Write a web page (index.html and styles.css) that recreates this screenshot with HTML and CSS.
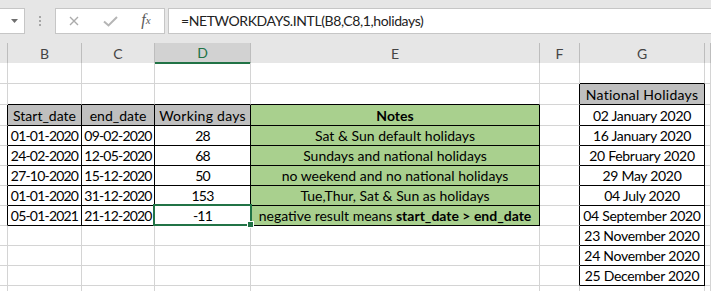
FILE: index.html
```html
<!DOCTYPE html>
<html lang="en">
<head>
  <meta charset="UTF-8">
  <title>NETWORKDAYS.INTL</title>
  <link rel="stylesheet" href="styles.css">
</head>
<body>

  <div class="formula-bar">
    <div class="name-box">
      <svg width="7" height="4" viewBox="0 0 7 4"><polygon points="0,0 7,0 3.5,4" fill="#6f6f6f"/></svg>
    </div>
    <div class="grip"><span></span><span></span><span></span></div>
    <div class="fn-buttons">
      <div class="slot">
        <svg width="10" height="10" viewBox="0 0 10 10"><path d="M1 1 L9 9 M9 1 L1 9" stroke="#ababab" stroke-width="1.4" fill="none"/></svg>
      </div>
      <div class="slot">
        <svg width="15" height="11" viewBox="0 0 15 11"><path d="M1 5.5 L5.5 9.5 L14 1" stroke="#b5b5b5" stroke-width="2" fill="none"/></svg>
      </div>
      <div class="slot fx">f<sub>x</sub></div>
    </div>
    <div class="formula">=NETWORKDAYS.INTL(B8,C8,1,holidays)</div>
  </div>

  <div class="sheet">
    <div class="row head">
      <div class="cell"></div>
      <div class="cell">B</div>
      <div class="cell">C</div>
      <div class="cell active">D</div>
      <div class="cell">E</div>
      <div class="cell">F</div>
      <div class="cell">G</div>
      <div class="cell"></div>
    </div>

    <!-- 1 -->
    <div class="row r21">
      <div class="cell"></div><div class="cell"></div><div class="cell"></div><div class="cell"></div>
      <div class="cell"></div><div class="cell"></div><div class="cell tt"></div><div class="cell"></div>
    </div>

    <!-- 2 -->
    <div class="row r21">
      <div class="cell"></div>
      <div class="cell tt"></div><div class="cell tt"></div><div class="cell tt"></div><div class="cell tt"></div>
      <div class="cell tl"></div>
      <div class="cell t gray wide">National Holidays</div>
      <div class="cell"></div>
    </div>

    <!-- 3 -->
    <div class="row r21">
      <div class="cell tl"></div>
      <div class="cell t gray">Start_date</div>
      <div class="cell t gray">end_date</div>
      <div class="cell t gray wide">Working days</div>
      <div class="cell t green bold">Notes</div>
      <div class="cell tl"></div>
      <div class="cell t day">02 January 2020</div>
      <div class="cell"></div>
    </div>

    <!-- 4 -->
    <div class="row">
      <div class="cell tl"></div>
      <div class="cell t num">01-01-2020</div>
      <div class="cell t num">09-02-2020</div>
      <div class="cell t num">28</div>
      <div class="cell t green">Sat &amp; Sun default holidays</div>
      <div class="cell tl"></div>
      <div class="cell t day">16 January 2020</div>
      <div class="cell"></div>
    </div>

    <!-- 5 -->
    <div class="row">
      <div class="cell tl"></div>
      <div class="cell t num">24-02-2020</div>
      <div class="cell t num">12-05-2020</div>
      <div class="cell t num">68</div>
      <div class="cell t green">Sundays and national holidays</div>
      <div class="cell tl"></div>
      <div class="cell t day">20 February 2020</div>
      <div class="cell"></div>
    </div>

    <!-- 6 -->
    <div class="row">
      <div class="cell tl"></div>
      <div class="cell t num">27-10-2020</div>
      <div class="cell t num">15-12-2020</div>
      <div class="cell t num">50</div>
      <div class="cell t green">no weekend and no national holidays</div>
      <div class="cell tl"></div>
      <div class="cell t day">29 May 2020</div>
      <div class="cell"></div>
    </div>

    <!-- 7 -->
    <div class="row">
      <div class="cell tl"></div>
      <div class="cell t num">01-01-2020</div>
      <div class="cell t num">31-12-2020</div>
      <div class="cell t num">153</div>
      <div class="cell t green">Tue,Thur, Sat &amp; Sun as holidays</div>
      <div class="cell tl"></div>
      <div class="cell t day">04 July 2020</div>
      <div class="cell"></div>
    </div>

    <!-- 8 -->
    <div class="row">
      <div class="cell tl"></div>
      <div class="cell t num">05-01-2021</div>
      <div class="cell t num">21-12-2020</div>
      <div class="cell t num selected">-11</div>
      <div class="cell t green"><span>negative result means <b>start_date &gt; end_date</b></span></div>
      <div class="cell tl"></div>
      <div class="cell t day">04 September 2020</div>
      <div class="cell"></div>
    </div>

    <!-- 9 -->
    <div class="row">
      <div class="cell"></div><div class="cell"></div><div class="cell"></div><div class="cell"></div><div class="cell"></div>
      <div class="cell tl"></div>
      <div class="cell t day">23 November 2020</div>
      <div class="cell"></div>
    </div>

    <!-- 10 -->
    <div class="row">
      <div class="cell"></div><div class="cell"></div><div class="cell"></div><div class="cell"></div><div class="cell"></div>
      <div class="cell tl"></div>
      <div class="cell t day">24 November 2020</div>
      <div class="cell"></div>
    </div>

    <!-- 11 -->
    <div class="row">
      <div class="cell"></div><div class="cell"></div><div class="cell"></div><div class="cell"></div><div class="cell"></div>
      <div class="cell tl"></div>
      <div class="cell t day">25 December 2020</div>
      <div class="cell"></div>
    </div>

    <!-- 12 -->
    <div class="row">
      <div class="cell"></div><div class="cell"></div><div class="cell"></div><div class="cell"></div>
      <div class="cell"></div><div class="cell"></div><div class="cell"></div><div class="cell"></div>
    </div>
  </div>

</body>
</html>
```

FILE: styles.css
```css
body {
  margin: 0;
  padding: 0;
  width: 711px;
  height: 291px;
  overflow: hidden;
  background-color: #FFF;
  font-family: Lato, "Liberation Sans", sans-serif;
  font-size: 14px;
  color: #000;
}

/* formula bar */

.formula-bar {
  height: 43px;
  box-sizing: border-box;
  padding-top: 8px;
  background-color: #E6E6E6;
  display: flex;
  align-items: flex-start;
}

.name-box {
  width: 26px;
  height: 26px;
  margin-left: -1px;
  box-sizing: border-box;
  padding-right: 6px;
  background-color: #FFF;
  border: 1px solid #C6C6C6;
  display: flex;
  align-items: center;
  justify-content: flex-end;
}

.grip {
  margin-left: 14px;
  margin-top: 8px;
  display: flex;
  flex-direction: column;
  gap: 2px;
}

.grip span {
  width: 2px;
  height: 2px;
  background-color: #A6A6A6;
}

.fn-buttons {
  width: 110px;
  height: 26px;
  margin-left: 14px;
  box-sizing: border-box;
  background-color: #FFF;
  border: 1px solid #C6C6C6;
  display: flex;
  align-items: center;
}

.slot {
  width: 36px;
  height: 24px;
  display: flex;
  align-items: center;
  justify-content: center;
}

.fx {
  font-family: "Liberation Serif", serif;
  font-style: italic;
  font-size: 16px;
  color: #595959;
  padding-bottom: 2px;
  box-sizing: border-box;
}

.fx sub {
  font-size: 11px;
  vertical-align: -1px;
}

.formula {
  flex: 1;
  height: 26px;
  margin-left: 3px;
  margin-right: -2px;
  box-sizing: border-box;
  padding-left: 12px;
  background-color: #FFF;
  border: 1px solid #C6C6C6;
  line-height: 24px;
  letter-spacing: -0.4px;
  color: #222;
}

/* sheet */

.sheet {
  height: 248px;
  overflow: hidden;
}

.row {
  display: grid;
  grid-template-columns: 8px 74px 73px 96px 289px 40px 125px 1fr;
  height: 20px;
}

.row.r21 {
  height: 21px;
}

.cell {
  box-sizing: border-box;
  border-right: 1px solid #D4D4D4;
  border-bottom: 1px solid #D4D4D4;
  display: flex;
  align-items: flex-end;
  justify-content: center;
  white-space: nowrap;
  line-height: 19px;
}

.head {
  background-color: #E6E6E6;
}

.head .cell {
  border-right-color: #BDBDBD;
  border-bottom: none;
  align-items: center;
  color: #444;
}

.head .cell.active {
  background-color: #D2D2D2;
  border-bottom: 2px solid #217346;
  color: #217346;
}

.num {
  letter-spacing: -0.8px;
}

.day {
  letter-spacing: -0.3px;
}

.wide {
  letter-spacing: 0.25px;
}

.t {
  border-right-color: #000;
  border-bottom-color: #000;
}

.tt {
  border-bottom-color: #000;
}

.tl {
  border-right-color: #000;
}

.gray {
  background-color: #BFBFBF;
}

.green {
  background-color: #A9D08E;
}

.bold {
  font-weight: bold;
}

.selected {
  position: relative;
  z-index: 1;
}

.selected::after {
  content: "";
  position: absolute;
  left: -2px;
  top: -2px;
  right: -2px;
  bottom: -1px;
  border: 2px solid #217346;
}

.selected::before {
  content: "";
  position: absolute;
  right: -4px;
  bottom: -3px;
  width: 5px;
  height: 5px;
  background-color: #217346;
  border: 1px solid #FFF;
  z-index: 2;
}
```
